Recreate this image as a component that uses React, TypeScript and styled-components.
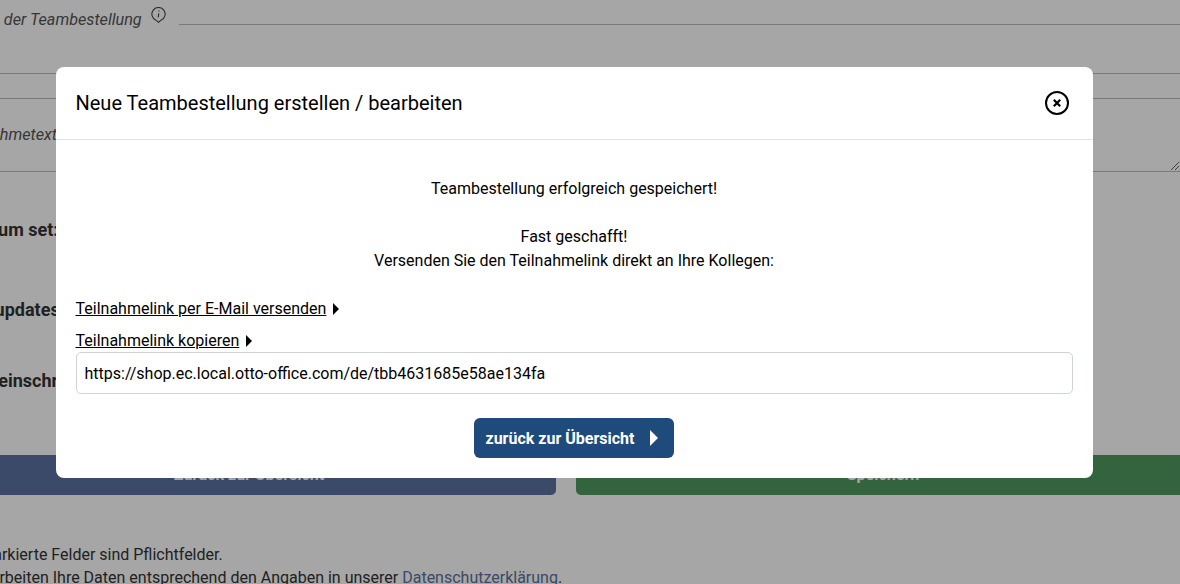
import React from "react";
import styled, { createGlobalStyle } from "styled-components";

const GlobalStyle = createGlobalStyle`
  html, body {
    margin: 0;
    padding: 0;
    height: 100%;
    overflow: hidden;
    background: #fff;
    font-family: Roboto, "Liberation Sans", sans-serif;
    font-size: 16px;
    color: #212529;
  }
`;

const Page = styled.div`
  width: 1248px;
  height: 584px;
  margin-left: -58px;
  overflow: hidden;
  display: flex;
  flex-direction: column;

  > * {
    flex: none;
  }
`;

const TitleRow = styled.div`
  height: 25px;
  display: flex;
  align-items: flex-start;
  padding-left: 16px;
`;

const FieldLegend = styled.span`
  font-style: italic;
  font-size: 16.2px;
  line-height: 24px;
  margin-top: 8px;
  white-space: nowrap;
  color: #555;
`;

const InfoMark = styled.svg`
  width: 15px;
  height: 16px;
  margin: 7px 0 0 9px;
  flex: none;
`;

const TitleLine = styled.div`
  flex: 1;
  align-self: flex-end;
  margin-left: 13px;
  border-bottom: 1px solid #bbb;
`;

const InputLine = styled.div<{ $height: number }>`
  height: ${(p) => p.$height}px;
  border-bottom: 1px solid #bbb;
  box-sizing: border-box;
`;

const TextArea = styled.div`
  height: 73px;
  box-sizing: border-box;
  border-bottom: 1px solid #bbb;
  padding: 24px 0 0 16px;
  font-style: italic;
  font-size: 16.2px;
  color: #555;
  line-height: 24px;
  position: relative;
`;

const Resize = styled.svg`
  position: absolute;
  right: 10px;
  bottom: 0;
  width: 10px;
  height: 10px;
`;

const OptionLabel = styled.div<{ $top: number; $indent: number }>`
  margin-top: ${(p) => p.$top}px;
  margin-left: ${(p) => p.$indent}px;
  font-weight: 700;
  font-size: 18px;
  line-height: 24px;
  white-space: nowrap;
  color: #333;
`;

const ButtonRow = styled.div`
  display: flex;
  gap: 20px;
  margin-top: 62px;
`;

const FormButton = styled.div<{ $bg: string }>`
  flex: 1;
  height: 40px;
  background: ${(p) => p.$bg};
  border-radius: 5px;
  color: #fff;
  font-weight: 700;
  text-align: center;
  line-height: 40px;
`;

const Notes = styled.div`
  margin-top: 48px;
  line-height: 23px;
  white-space: nowrap;
  color: #333;
`;

const NoteLine = styled.div<{ $indent?: number }>`
  margin-left: ${(p) => p.$indent ?? 0}px;
`;

const NoteLink = styled.a`
  color: #5972a0;
`;

const Overlay = styled.div`
  position: fixed;
  inset: 0;
  background: rgba(0, 0, 0, 0.35);
  padding: 67px 87px 0 56px;
`;

const Modal = styled.div`
  background: #fff;
  border-radius: 8px;
  height: 411px;
  color: #000;
`;

const ModalHeader = styled.div`
  height: 73px;
  box-sizing: border-box;
  border-bottom: 1px solid #dee2e6;
  display: flex;
  align-items: center;
  justify-content: space-between;
  padding: 0 24px 0 19.5px;
`;

const ModalTitle = styled.h5`
  margin: 0;
  font-size: 20px;
  font-weight: 400;
  line-height: 30px;
`;

const CloseButton = styled.button`
  width: 24px;
  height: 24px;
  padding: 0;
  border: 0;
  background: none;
  display: flex;
`;

const ModalBody = styled.div`
  padding: 37px 20.5px 0 19.5px;
  line-height: 24px;
`;

const Message = styled.p`
  margin: 0;
  text-align: center;
`;

const ToggleLink = styled.div<{ $top: number }>`
  margin-top: ${(p) => p.$top}px;
  display: flex;
  align-items: center;
  gap: 7px;
`;

const ToggleText = styled.a`
  color: #000;
  text-decoration: underline;
`;

const Caret = styled.span`
  width: 0;
  height: 0;
  border-left: 6px solid #000;
  border-top: 6px solid transparent;
  border-bottom: 6px solid transparent;
`;

const LinkField = styled.div`
  margin-top: -1px;
  height: 42px;
  box-sizing: border-box;
  border: 1px solid #ced4da;
  border-radius: 5px;
  padding: 1px 8px 0;
  line-height: 40px;
`;

const Actions = styled.div`
  display: flex;
  justify-content: center;
  margin-top: 24px;
`;

const BackButton = styled.button`
  width: 200px;
  height: 40px;
  border: 0;
  border-radius: 6px;
  background: #1f4a7c;
  color: #fff;
  font-family: inherit;
  font-size: 16px;
  font-weight: 700;
  display: flex;
  align-items: center;
  justify-content: space-between;
  padding: 0 16px 0 11.5px;
`;

const ButtonCaret = styled.span`
  width: 0;
  height: 0;
  border-left: 8px solid #fff;
  border-top: 8px solid transparent;
  border-bottom: 8px solid transparent;
`;

export default function App() {
  return (
    <>
      <GlobalStyle />
      <Page>
        <TitleRow>
          <FieldLegend>Name der Teambestellung</FieldLegend>
          <InfoMark viewBox="0 0 15 16" fill="none" stroke="#444" strokeWidth="1.1">
            <path d="M7.5 15.4 L5 13.2 A6.6 6.6 0 1 1 10 13.2 Z" />
            <path d="M8 3.6 L8 4.6 M7.8 6.4 L7.2 10.4" />
          </InfoMark>
          <TitleLine />
        </TitleRow>
        <InputLine $height={49} />
        <InputLine $height={25} />
        <TextArea>
          Teilnahmetext
          <Resize viewBox="0 0 10 10" stroke="#666" strokeWidth="1">
            <path d="M1 9 L9 1 M5 9 L9 5" />
          </Resize>
        </TextArea>
        <OptionLabel $top={46} $indent={8}>Premium set:</OptionLabel>
        <OptionLabel $top={56} $indent={-4}>E-Mail updates</OptionLabel>
        <OptionLabel $top={47} $indent={-33}>Teilnahme einschränken</OptionLabel>
        <ButtonRow>
          <FormButton $bg="#5972a0">Zurück zur Übersicht</FormButton>
          <FormButton $bg="#4f9a5f">Speichern</FormButton>
        </ButtonRow>
        <Notes>
          <NoteLine $indent={9}>Rot markierte Felder sind Pflichtfelder.</NoteLine>
          <NoteLine>
            Wir verarbeiten Ihre Daten entsprechend den Angaben in unserer{" "}
            <NoteLink>Datenschutzerklärung</NoteLink>.
          </NoteLine>
        </Notes>
      </Page>
      <Overlay>
        <Modal>
          <ModalHeader>
            <ModalTitle>Neue Teambestellung erstellen / bearbeiten</ModalTitle>
            <CloseButton>
              <svg viewBox="0 0 24 24" width="24" height="24" fill="none" stroke="#000">
                <circle cx="12" cy="12" r="11" strokeWidth="2" />
                <path d="M8.8 8.8 L15.2 15.2 M15.2 8.8 L8.8 15.2" strokeWidth="2.2" />
              </svg>
            </CloseButton>
          </ModalHeader>
          <ModalBody>
            <Message>Teambestellung erfolgreich gespeichert!</Message>
            <Message>&nbsp;</Message>
            <Message>Fast geschafft!</Message>
            <Message>Versenden Sie den Teilnahmelink direkt an Ihre Kollegen:</Message>
            <ToggleLink $top={24}>
              <ToggleText>Teilnahmelink per E-Mail versenden</ToggleText>
              <Caret />
            </ToggleLink>
            <ToggleLink $top={8}>
              <ToggleText>Teilnahmelink kopieren</ToggleText>
              <Caret />
            </ToggleLink>
            <LinkField>https://shop.ec.local.otto-office.com/de/tbb4631685e58ae134fa</LinkField>
            <Actions>
              <BackButton>
                zurück zur Übersicht
                <ButtonCaret />
              </BackButton>
            </Actions>
          </ModalBody>
        </Modal>
      </Overlay>
    </>
  );
}
